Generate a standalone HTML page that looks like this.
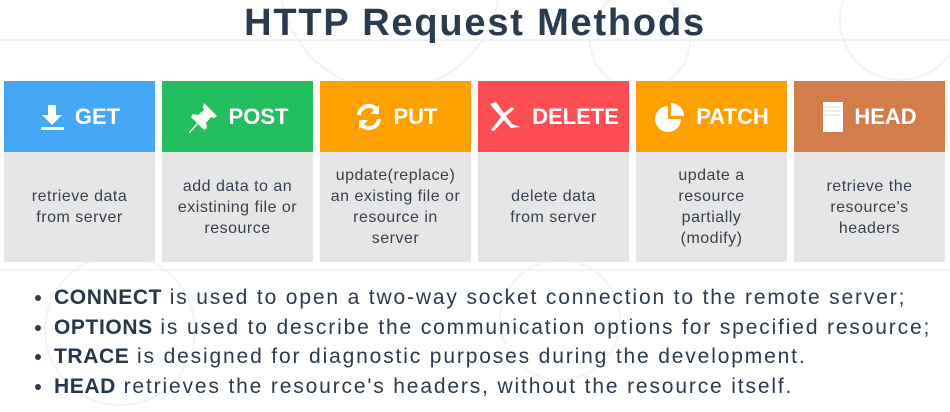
<!DOCTYPE html>
<html><head><meta charset="utf-8"><style>
body{margin:0;width:950px;height:412px;background:#fff;position:relative;overflow:hidden;font-family:"Liberation Sans",sans-serif;color:#2b3a4e}
h1{position:absolute;top:0;left:0;width:950px;text-align:center;margin:0;font-size:38px;line-height:46px;font-weight:bold;letter-spacing:1.8px;color:#2a3a4f}
.col{position:absolute;top:81px;width:151px;height:181px}
.hd{height:71px;display:flex;align-items:center;justify-content:center;color:#fff;font-weight:bold;font-size:22px;gap:10px}
.bd{height:110px;background:#e6e6e7;display:flex;align-items:center;justify-content:center;text-align:center;font-size:16px;letter-spacing:0.5px;line-height:21px;color:#36404f;padding:0 2px;box-sizing:border-box;white-space:nowrap}
ul{position:absolute;top:283px;left:30px;margin:0;padding:0 0 0 24px;font-size:21px;line-height:29.5px;letter-spacing:1.85px;white-space:nowrap;color:#2b3a4e}
b{color:#26364b;letter-spacing:0.6px}
svg.bg{position:absolute;left:0;top:0}
</style></head><body>
<svg class="bg" width="950" height="412"><g fill="none" stroke="#f2f3f5" stroke-width="2">
<circle cx="390" cy="-20" r="110"/><circle cx="640" cy="40" r="50"/><circle cx="120" cy="330" r="75"/><circle cx="560" cy="320" r="60"/><circle cx="900" cy="20" r="60"/>
<line x1="0" y1="40" x2="950" y2="40"/><line x1="0" y1="270" x2="950" y2="270"/></g></svg>
<h1>HTTP Request Methods</h1>

<div class="col" style="left:4px"><div class="hd" style="background:#45a8f6"><svg width="26" height="28" viewBox="0 0 26 28"><path d="M9 2h8v10h6l-10 10L3 12h6z" fill="#fff"/><rect x="2" y="24" width="23" height="3" fill="#fff"/></svg>GET</div><div class="bd">retrieve data<br>from server</div></div>

<div class="col" style="left:162px"><div class="hd" style="background:#23bf5f"><svg width="32" height="32" viewBox="0 0 32 32"><path d="M17 2l13 13-3 2-3-1-5 6 1 5-3 2-6-6-8 9-1-1 8-9-6-6 2-3 5 1 6-5-1-3z" fill="#fff"/></svg>POST</div><div class="bd">add data to an<br>existining file or<br>resource</div></div>

<div class="col" style="left:320px"><div class="hd" style="background:#ffa001"><svg width="30" height="30" viewBox="0 0 30 30"><path d="M5 13A10 10 0 0 1 23 8M25 17A10 10 0 0 1 7 22" fill="none" stroke="#fff" stroke-width="4"/><path d="M25 3v9h-9z M5 27v-9h9z" fill="#fff"/></svg>PUT</div><div class="bd">update(replace)<br>an existing file or<br>resource in<br>server</div></div>

<div class="col" style="left:478px"><div class="hd" style="background:#fe4d55"><svg width="34" height="32" viewBox="0 0 34 32"><path d="M2 3l6-2 8 11 8-6 2 2-8 7 6 8 8 3-9 1-7-8-10 11-3-1 10-13z" fill="#fff"/></svg>DELETE</div><div class="bd">delete data<br>from server</div></div>

<div class="col" style="left:636px"><div class="hd" style="background:#ffa001"><svg width="32" height="32" viewBox="0 0 32 32"><path d="M14 5A13 13 0 1 0 27 18H14z" fill="#fff"/><path d="M17 2A13 13 0 0 1 30 15H17z" fill="#fff"/></svg>PATCH</div><div class="bd">update a<br>resource<br>partially<br>(modify)</div></div>

<div class="col" style="left:794px"><div class="hd" style="background:#d37e4a"><svg width="22" height="32" viewBox="0 0 22 32"><rect x="1" y="1" width="20" height="30" fill="#fff"/><path d="M3 6h16M3 10h16M3 14h16" stroke="#e0d8d0" stroke-width="1"/></svg>HEAD</div><div class="bd">retrieve the<br>resource's<br>headers</div></div>

<ul>
<li><b>CONNECT</b> is used to open a two-way socket connection to the remote server;</li>
<li><b>OPTIONS</b> is used to describe the communication options for specified resource;</li>
<li><b>TRACE</b> is designed for diagnostic purposes during the development.</li>
<li><b>HEAD</b> retrieves the resource's headers, without the resource itself.</li>
</ul>
</body></html>
